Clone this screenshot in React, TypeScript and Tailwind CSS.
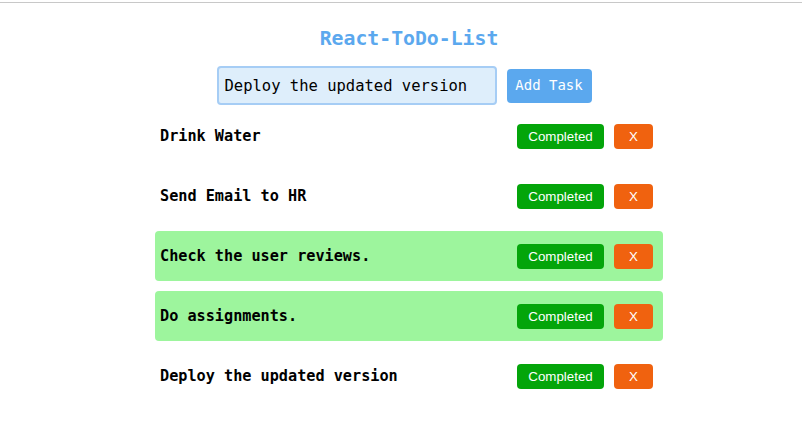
const tasks = [
  { text: "Drink Water", done: false },
  { text: "Send Email to HR", done: false },
  { text: "Check the user reviews.", done: true },
  { text: "Do assignments.", done: true },
  { text: "Deploy the updated version", done: false },
];

function TaskRow({ text, done }: { text: string; done: boolean }) {
  return (
    <li
      className={
        "h-[50px] flex items-center justify-between pl-[5px] pr-[10px] rounded-[4px] " +
        (done ? "bg-[#9df59d]" : "bg-transparent")
      }
    >
      <span className="pt-px text-[15.2px] font-bold text-black">{text}</span>
      <div className="flex items-center gap-[10px] pt-px font-['Liberation_Sans',Arial,sans-serif] text-[13.333px] text-white">
        <button className="h-[25px] w-[87px] rounded-[4px] bg-[#04a50a] pt-px">Completed</button>
        <button className="h-[25px] w-[39px] rounded-[4px] bg-[#f0620f] pt-px">X</button>
      </div>
    </li>
  );
}

export default function App() {
  return (
    <div className="min-h-[440px] bg-white pt-[2px] font-['DejaVu_Sans_Mono',monospace]">
      <div className="border-t border-[#c8c8c8]" />
      <div className="pl-4">
        <h1 className="mt-[22px] text-center text-[19.8px] leading-[28px] font-bold text-[#5ba8ee]">
          React-ToDo-List
        </h1>
        <div className="mt-[13px] flex items-center justify-center gap-[10px] pr-[10px]">
          <input
            className="h-[39px] w-[280px] rounded-[4px] border-2 border-[#a6cdf5] bg-[#deeefb] px-[6px] text-[15.5px] text-black outline-none"
            defaultValue="Deploy the updated version"
          />
          <button className="h-[34px] w-[85px] rounded-[4px] bg-[#5ba8ee] text-[14px] text-white">
            Add Task
          </button>
        </div>
        <ul className="mx-auto mt-[6px] flex w-[508px] flex-col gap-[10px]">
          {tasks.map((t) => (
            <TaskRow key={t.text} text={t.text} done={t.done} />
          ))}
        </ul>
      </div>
    </div>
  );
}
